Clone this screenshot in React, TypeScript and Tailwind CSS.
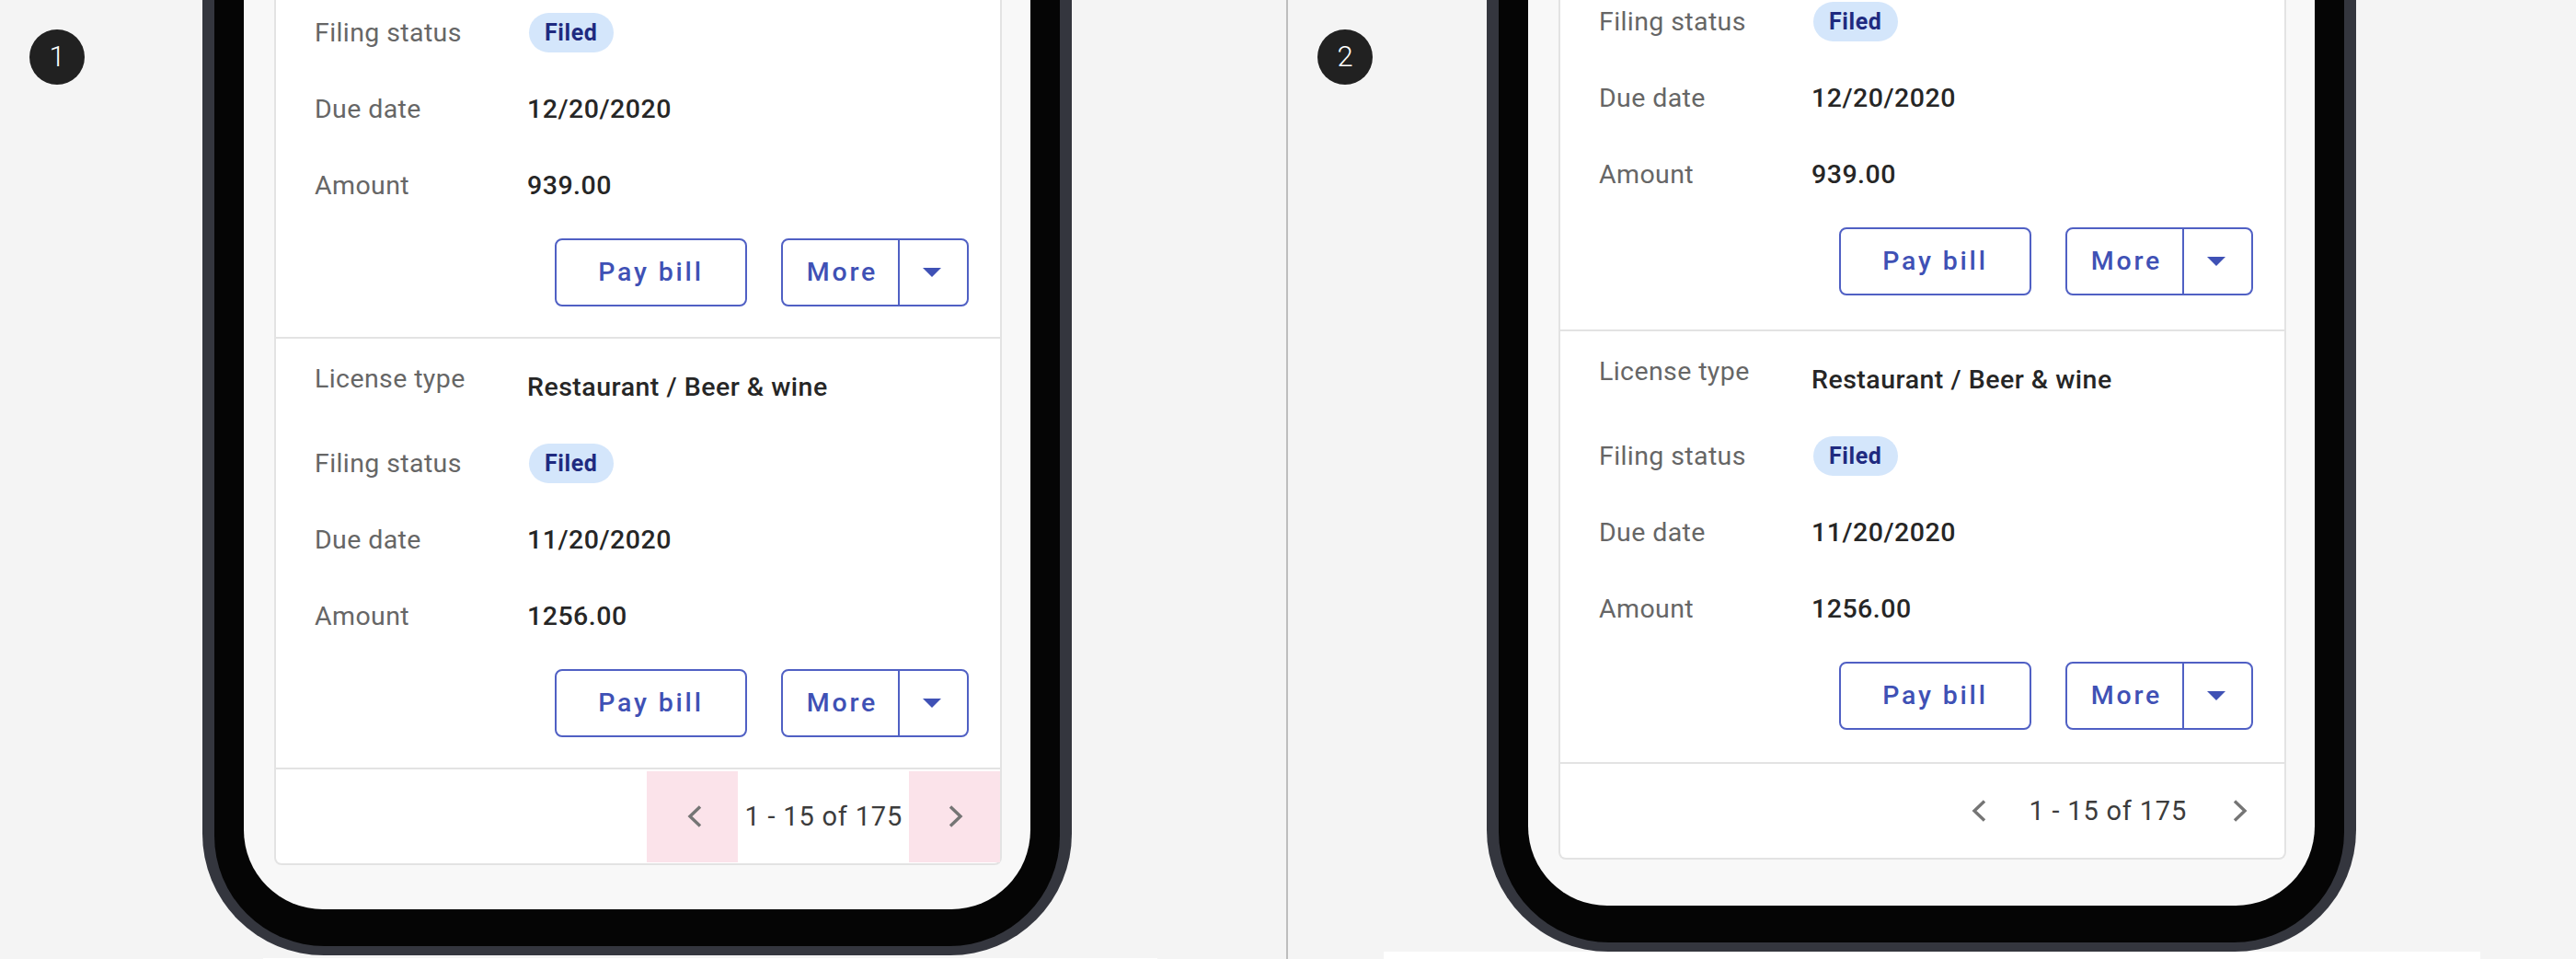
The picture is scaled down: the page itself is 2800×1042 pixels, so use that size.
import React from "react"

type Bill = {
  license: string
  status: string
  due: string
  amount: string
}

const bills: Bill[] = [
  { license: "Restaurant / Beer & wine", status: "Filed", due: "12/20/2020", amount: "939.00" },
  { license: "Restaurant / Beer & wine", status: "Filed", due: "11/20/2020", amount: "1256.00" },
]

function cn(...parts: string[]) {
  return parts.filter(Boolean).join(" ")
}

function ChevronLeft() {
  return (
    <svg width="18" height="24" viewBox="0 0 18 24" fill="none" className="ml-[4px]">
      <polyline points="15,1.5 4,12 15,22.5" stroke="#757575" strokeWidth="3.4" />
    </svg>
  )
}

function ChevronRight() {
  return (
    <svg width="18" height="24" viewBox="0 0 18 24" fill="none" className="ml-[3px]">
      <polyline points="3,1.5 14,12 3,22.5" stroke="#757575" strokeWidth="3.4" />
    </svg>
  )
}

function Row({ label, children, top }: { label: string; children: React.ReactNode; top?: boolean }) {
  return (
    <div className="flex h-[83px] items-center">
      <div
        className={
          top
            ? "w-[231px] shrink-0 self-start pt-[16px] text-[28.5px] leading-[34px] tracking-[0.4px] text-[#666666]"
            : "w-[231px] shrink-0 text-[28.5px] leading-[34px] tracking-[0.4px] text-[#666666]"
        }
      >
        {label}
      </div>
      <div className="text-[28.5px] font-medium leading-[34px] tracking-[0.5px] text-[#262626]">{children}</div>
    </div>
  )
}

function BillCard({ bill, first, tight }: { bill: Bill; first?: boolean; tight?: boolean }) {
  return (
    <section
      className={cn(
        "pl-[42px] pr-[34px] pt-[11px]",
        first ? "" : "border-t-2 border-[#e3e3e3]",
        tight ? (first ? "pb-[37px]" : "pb-[35px]") : "pb-[33px]"
      )}
    >
      <Row label="License type" top>
        {bill.license}
      </Row>
      <Row label="Filing status">
        <span className="ml-[2px] inline-flex h-[43px] items-center rounded-full bg-[#d4e6fb] px-[17px] text-[25px] font-bold tracking-[0.6px] text-[#1f2a80]">
          {bill.status}
        </span>
      </Row>
      <Row label="Due date">{bill.due}</Row>
      <Row label="Amount">{bill.amount}</Row>

      <div className="mt-[16px] flex justify-end gap-[37px]">
        <button
          type="button"
          className="flex h-[74px] w-[209px] items-center justify-center rounded-[8px] border-2 border-[#5060c4] text-[28.5px] font-medium tracking-[2.8px] text-[#3f51b5]"
        >
          Pay bill
        </button>
        <div className="flex h-[74px] w-[204px] rounded-[8px] border-2 border-[#5060c4]">
          <button
            type="button"
            className="flex w-[127px] items-center justify-center border-r-2 border-[#5060c4] pl-[4px] text-[28.5px] font-medium tracking-[2.8px] text-[#3f51b5]"
          >
            More
          </button>
          <button type="button" className="flex flex-1 items-center justify-center pr-[4px]">
            <svg width="20" height="10" viewBox="0 0 20 10">
              <polygon points="0,0 20,0 10,10" fill="#3f51b5" />
            </svg>
          </button>
        </div>
      </div>
    </section>
  )
}

function Phone({ highlight, tight }: { highlight?: boolean; tight?: boolean }) {
  return (
    <div className="w-[945px] shrink-0 rounded-b-[132px] bg-[#34363e] px-[13px] pb-[10px]">
      <div className="rounded-b-[120px] bg-[#050505] px-[32px] pb-[40px]">
        <div
          className={cn(
            "rounded-b-[86px] bg-[#f8f8f8] pl-[33px] pr-[31px]",
            tight ? "pb-[50px]" : "pb-[48px]"
          )}
        >
          <div className="rounded-b-[8px] border-2 border-t-0 border-[#e3e3e3] bg-white">
            {bills.map((b, i) => (
              <BillCard key={b.due} bill={b} first={i === 0} tight={tight} />
            ))}

            {/* Pagination */}
            <div className="flex h-[104px] items-center justify-end border-t-2 border-[#e3e3e3]">
              <button
                type="button"
                className={cn(
                  "flex h-[99px] w-[99px] items-center justify-center",
                  highlight ? "bg-[#fbe3ea]" : ""
                )}
                aria-label="Previous page"
              >
                <ChevronLeft />
              </button>
              <span className="px-[7px] text-[29px] leading-[34px] tracking-[0.8px] text-[#3c3c3c]">
                1 - 15 of 175
              </span>
              <button
                type="button"
                className={cn(
                  "flex h-[99px] w-[99px] items-center justify-center",
                  highlight ? "bg-[#fbe3ea]" : ""
                )}
                aria-label="Next page"
              >
                <ChevronRight />
              </button>
            </div>
          </div>
        </div>
      </div>
    </div>
  )
}

function StepBadge({ n }: { n: number }) {
  return (
    <div className="absolute left-[32px] top-[32px] flex size-[60px] items-center justify-center rounded-full bg-[#212121] text-[31px] font-light text-white">
      {n}
    </div>
  )
}

export default function App() {
  return (
    <div
      className="flex h-[1042px] w-[2800px] overflow-hidden bg-[#f4f4f4]"
      style={{ fontFamily: "Roboto, 'Liberation Sans', sans-serif" }}
    >
      {/* Variant 1: touch targets highlighted */}
      <div className="relative flex h-full w-[1398px] shrink-0 flex-col justify-end overflow-hidden">
        <StepBadge n={1} />
        <div className="ml-[220px] shrink-0">
          <Phone highlight />
        </div>
        <div className="ml-[286px] mt-[3px] h-[1px] w-[972px] shrink-0 bg-white" />
      </div>

      <div className="h-full w-[2px] shrink-0 bg-[#bdbdbd]" />

      {/* Variant 2 */}
      <div className="relative flex h-full w-[1400px] shrink-0 flex-col justify-end overflow-hidden">
        <StepBadge n={2} />
        <div className="ml-[216px] shrink-0">
          <Phone tight />
        </div>
        <div className="ml-[104px] h-[8px] w-[1192px] shrink-0 bg-white" />
      </div>
    </div>
  )
}
